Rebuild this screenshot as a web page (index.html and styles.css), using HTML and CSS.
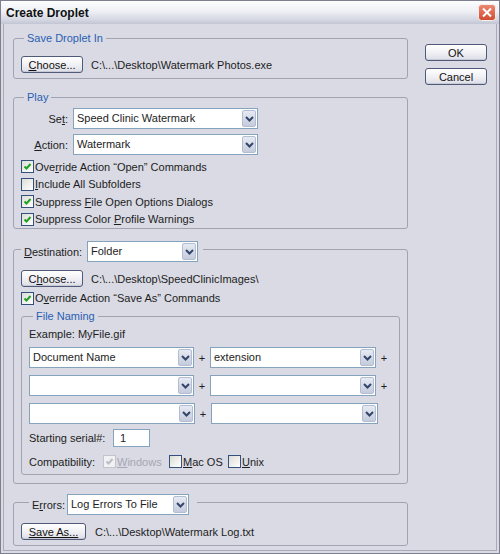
FILE: index.html
```html
<!DOCTYPE html>
<html>
  <head>
    <meta charset="utf-8">
    <title>Create Droplet</title>
    <link rel="stylesheet" href="styles.css">
  </head>
  <body>
    <div class="window">
      <div class="titlebar">
        <span class="title">Create Droplet</span>
        <span class="close">
          <svg width="18" height="17" viewBox="0 0 18 17">
            <defs>
              <linearGradient id="red" x1="0" y1="0" x2="0" y2="1">
                <stop offset="0" stop-color="#ee8a72"/>
                <stop offset="1" stop-color="#cf4a30"/>
              </linearGradient>
            </defs>
            <rect x="0.5" y="0.5" width="17" height="16" rx="3" fill="url(#red)" stroke="#f4f0f0"/>
            <path d="M5 4.5 L13 12.5 M13 4.5 L5 12.5" stroke="#fff" stroke-width="2"/>
          </svg>
        </span>
      </div>

      <div class="client">
        <div class="main">

          <fieldset class="group g-save">
            <legend>Save Droplet In</legend>
            <div class="pathrow">
              <button class="btn"><u>C</u>hoose...</button>
              <span class="path">C:\...\Desktop\Watermark Photos.exe</span>
            </div>
          </fieldset>

          <fieldset class="group g-play">
            <legend>Play</legend>
            <div class="field">
              <span class="flabel">Se<u>t</u>:</span>
              <div class="combo w-play">
                <span class="val">Speed Clinic Watermark</span>
                <span class="arr"><svg width="9" height="6" viewBox="0 0 9 6"><polyline points="1,1 4.5,4.5 8,1" fill="none" stroke="#34456a" stroke-width="2"/></svg></span>
              </div>
            </div>
            <div class="field">
              <span class="flabel"><u>A</u>ction:</span>
              <div class="combo w-play">
                <span class="val">Watermark</span>
                <span class="arr"><svg width="9" height="6" viewBox="0 0 9 6"><polyline points="1,1 4.5,4.5 8,1" fill="none" stroke="#34456a" stroke-width="2"/></svg></span>
              </div>
            </div>
            <div class="checks">
              <div class="check"><span class="cb"><svg width="9" height="9" viewBox="0 0 9 9"><polyline points="1.5,4.5 3.5,6.5 7.5,2" fill="none" stroke="#21a121" stroke-width="2"/></svg></span><span>Ove<u>r</u>ride Action “Open” Commands</span></div>
              <div class="check"><span class="cb"></span><span><u>I</u>nclude All Subfolders</span></div>
              <div class="check"><span class="cb"><svg width="9" height="9" viewBox="0 0 9 9"><polyline points="1.5,4.5 3.5,6.5 7.5,2" fill="none" stroke="#21a121" stroke-width="2"/></svg></span><span>Suppress <u>F</u>ile Open Options Dialogs</span></div>
              <div class="check"><span class="cb"><svg width="9" height="9" viewBox="0 0 9 9"><polyline points="1.5,4.5 3.5,6.5 7.5,2" fill="none" stroke="#21a121" stroke-width="2"/></svg></span><span>Suppress Color <u>P</u>rofile Warnings</span></div>
            </div>
          </fieldset>

          <fieldset class="group g-dest">
            <legend>
              <div class="legrow">
                <span class="dlabel"><u>D</u>estination:</span>
                <div class="combo w-dest">
                  <span class="val">Folder</span>
                  <span class="arr"><svg width="9" height="6" viewBox="0 0 9 6"><polyline points="1,1 4.5,4.5 8,1" fill="none" stroke="#34456a" stroke-width="2"/></svg></span>
                </div>
              </div>
            </legend>
            <div class="pathrow">
              <button class="btn">C<u>h</u>oose...</button>
              <span class="path">C:\...\Desktop\SpeedClinicImages\</span>
            </div>
            <div class="check tall"><span class="cb"><svg width="9" height="9" viewBox="0 0 9 9"><polyline points="1.5,4.5 3.5,6.5 7.5,2" fill="none" stroke="#21a121" stroke-width="2"/></svg></span><span>O<u>v</u>erride Action “Save As” Commands</span></div>

            <fieldset class="group g-name">
              <legend>File Naming</legend>
              <div class="example">Example: MyFile.gif</div>
              <div class="nrow">
                <div class="combo w-n1">
                  <span class="val">Document Name</span>
                  <span class="arr"><svg width="9" height="6" viewBox="0 0 9 6"><polyline points="1,1 4.5,4.5 8,1" fill="none" stroke="#34456a" stroke-width="2"/></svg></span>
                </div>
                <span class="plus">+</span>
                <div class="combo w-n2">
                  <span class="val">extension</span>
                  <span class="arr"><svg width="9" height="6" viewBox="0 0 9 6"><polyline points="1,1 4.5,4.5 8,1" fill="none" stroke="#34456a" stroke-width="2"/></svg></span>
                </div>
                <span class="plus">+</span>
              </div>
              <div class="nrow">
                <div class="combo w-n1">
                  <span class="val"></span>
                  <span class="arr"><svg width="9" height="6" viewBox="0 0 9 6"><polyline points="1,1 4.5,4.5 8,1" fill="none" stroke="#34456a" stroke-width="2"/></svg></span>
                </div>
                <span class="plus">+</span>
                <div class="combo w-n2">
                  <span class="val"></span>
                  <span class="arr"><svg width="9" height="6" viewBox="0 0 9 6"><polyline points="1,1 4.5,4.5 8,1" fill="none" stroke="#34456a" stroke-width="2"/></svg></span>
                </div>
                <span class="plus">+</span>
              </div>
              <div class="nrow">
                <div class="combo w-n1">
                  <span class="val"></span>
                  <span class="arr"><svg width="9" height="6" viewBox="0 0 9 6"><polyline points="1,1 4.5,4.5 8,1" fill="none" stroke="#34456a" stroke-width="2"/></svg></span>
                </div>
                <span class="plus">+</span>
                <div class="combo w-n2">
                  <span class="val"></span>
                  <span class="arr"><svg width="9" height="6" viewBox="0 0 9 6"><polyline points="1,1 4.5,4.5 8,1" fill="none" stroke="#34456a" stroke-width="2"/></svg></span>
                </div>
              </div>
              <div class="serial">
                <span class="slabel">Starting serial#:</span>
                <span class="sbox">1</span>
              </div>
              <div class="compat">
                <span class="clabel">Compatibility:</span>
                <span class="opt o-win"><span class="cb off"><svg width="9" height="9" viewBox="0 0 9 9"><polyline points="1.5,4.5 3.5,6.5 7.5,2" fill="none" stroke="#bcbcc6" stroke-width="2"/></svg></span><span class="dim"><u>W</u>indows</span></span>
                <span class="opt o-mac"><span class="cb"></span><span><u>M</u>ac OS</span></span>
                <span class="opt"><span class="cb"></span><span><u>U</u>nix</span></span>
              </div>
            </fieldset>
          </fieldset>

          <fieldset class="group g-errors">
            <legend>
              <div class="legrow">
                <span class="elabel">E<u>r</u>rors:</span>
                <div class="combo w-err">
                  <span class="val">Log Errors To File</span>
                  <span class="arr"><svg width="9" height="6" viewBox="0 0 9 6"><polyline points="1,1 4.5,4.5 8,1" fill="none" stroke="#34456a" stroke-width="2"/></svg></span>
                </div>
              </div>
            </legend>
            <div class="pathrow">
              <button class="btn w-save"><u>Save As...</u></button>
              <span class="path">C:\...\Desktop\Watermark Log.txt</span>
            </div>
          </fieldset>

        </div>

        <div class="side">
          <button class="btn">OK</button>
          <button class="btn">Cancel</button>
        </div>
      </div>
    </div>
  </body>
</html>
```

FILE: styles.css
```css
body { margin: 0; font: 11px/14px "Liberation Sans", Arial, sans-serif; color: #1d1d1d; }
u { text-underline-offset: 1px }

.window { width: 500px; height: 554px; box-sizing: border-box; border: 1px solid #7d7e8e; background: #d9dae3; display: flex; flex-direction: column }
.titlebar { height: 23px; flex: none; display: flex; align-items: center; justify-content: space-between; padding: 0 3px 0 5px;
  background: linear-gradient(#fdfdfe, #eef0f5 45%, #d6d8e3 80%, #c2c5d4) }
.title { font-weight: bold; font-size: 12px; color: #111 }
.close { display: flex }
.client { flex: 1; display: flex; margin: 0 2px 2px; border: 1px solid #a9aab7; border-top: 0; padding: 7px 0 0 9px }
.main { width: 395px; flex: none }
.side { margin-left: 17px; padding-top: 13px; display: flex; flex-direction: column; gap: 7px }

.btn { width: 62px; height: 17px; padding: 0; font: inherit; color: #111; border: 1px solid #4f5b78; border-radius: 3px;
  background: linear-gradient(#ffffff, #f1f1f5 50%, #dcdde6); box-shadow: inset 0 -1px #c8cad6 }
.w-save { width: 65px }

.group { margin: 0; border: 1px solid #a2a3b0; border-radius: 3px; padding: 0 7px; min-width: 0 }
.group legend { padding: 0 3px; margin-left: 3px; color: #2a5fb4; line-height: 14px }
.g-save { padding-top: 11px; padding-bottom: 5px }
.g-play { margin-top: 11px; padding-top: 4px; padding-bottom: 0 }
.g-dest { margin-top: 7px; padding-top: 8px; padding-bottom: 8px }
.g-errors { margin-top: 5px; padding-top: 8px; padding-bottom: 5px }
.g-name { margin-top: 2px; padding-top: 4px; padding-bottom: 4px }
.g-name > legend { margin-left: 4px }
.g-dest > legend { padding: 5px 5px 0 3px; margin-left: 0; color: #1d1d1d }
.g-errors > legend { padding: 5px 8px 0 3px; margin-left: 8px; color: #1d1d1d }
.legrow { display: flex; align-items: center }
.dlabel { width: 63px }
.elabel { width: 35px }

.pathrow { display: flex; align-items: center; height: 17px }
.path { margin-left: 8px }
.g-errors .path { margin-left: 9px }

.field { display: flex; align-items: center; height: 21px }
.field + .field { margin-top: 5px }
.flabel { width: 47px; text-align: right; margin-right: 5px }

.combo { display: flex; height: 21px; box-sizing: border-box; border: 1px solid #86a3bd; background: #fff }
.combo .val { flex: 1; padding-left: 3px; line-height: 19px; white-space: nowrap; overflow: hidden }
.combo .arr { width: 14px; margin: 1px; box-sizing: border-box; border: 1px solid #b3bdd2; border-radius: 2px; display: flex; align-items: center; justify-content: center;
  background: linear-gradient(#e6eaf3, #c4cbdc) }
.w-play { width: 185px }
.w-dest { width: 111px }
.w-err { width: 122px }
.w-n1 { width: 166px }
.w-n2 { width: 167px }

.checks { margin-top: 3px }
.check { display: flex; align-items: center; height: 17.5px }
.check.tall { height: 18px; margin-top: 2px }
.cb { width: 11px; height: 11px; flex: none; border: 1px solid #34507c; margin-right: 1px; display: flex; align-items: center; justify-content: center;
  background: linear-gradient(135deg, #dcdcd6, #ffffff) }
.cb.off { border-color: #c2c3cc; background: #f1f1f4 }
.dim { color: #a6a7b2 }

.example { height: 14px }
.nrow { display: flex; align-items: center; height: 21px; margin-top: 7px }
.example + .nrow { margin-top: 6px }
.plus { width: 16px; text-align: center }

.serial { display: flex; align-items: center; height: 18px; margin-top: 5px }
.slabel { width: 84px }
.sbox { width: 37px; height: 18px; box-sizing: border-box; border: 1px solid #86a3bd; background: #fff; padding-left: 6px; line-height: 16px }

.compat { display: flex; align-items: center; height: 17px; margin-top: 6px }
.clabel { width: 74px }
.opt { display: flex; align-items: center }
.o-win { width: 66px }
.o-mac { width: 59px }
```
